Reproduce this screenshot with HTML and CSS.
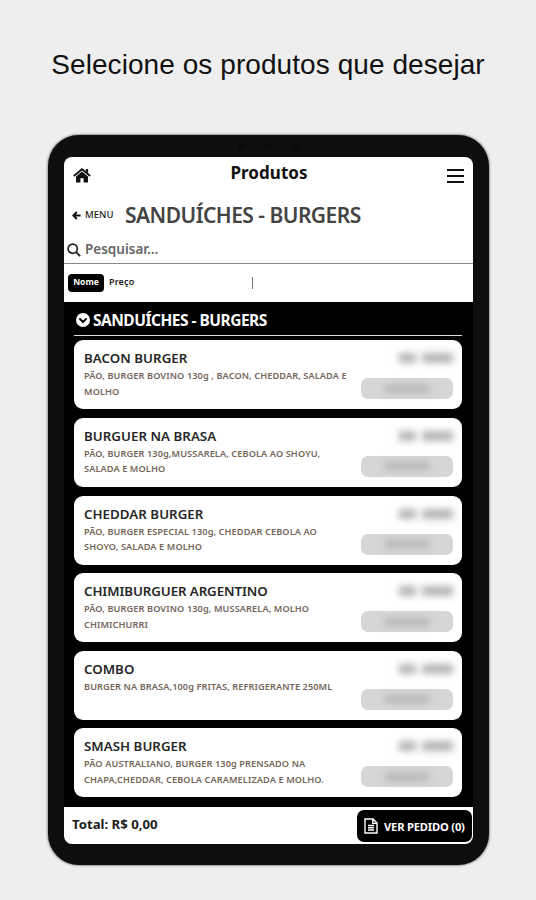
FILE: index.html
```html
<!DOCTYPE html>
<html lang="pt-BR">
<head>
    <meta charset="UTF-8">
    <meta name="viewport" content="width=device-width, initial-scale=1.0">
    <title>Produtos</title>
    <link rel="stylesheet" href="styles.css">
</head>
<body>
    <h1 class="headline">Selecione os produtos que desejar</h1>
    <div class="tablet">
        <div class="camera"><i></i><i></i><i></i></div>
        <div class="screen">
            <div class="topbar">
                <svg class="home" viewBox="0 0 18 15"><path d="M0.8 8 L9 1.2 L17.2 8" fill="none" stroke="#111" stroke-width="1.8"/><path d="M12.8 1h2.3v4.6l-2.3-2z M3 8.4 9 3.6l6 4.8V14.5h-4.4v-4.2H7.4v4.2H3z" fill="#111"/></svg>
                <span class="page-title">Produtos</span>
                <div class="burger"><i></i><i></i><i></i></div>
            </div>
            <div class="category">
                <svg class="back" viewBox="0 0 9 9"><path d="M8.6 4.5H1.6M4.8 1 1.3 4.5 4.8 8" fill="none" stroke="#111" stroke-width="1.9"/></svg>
                <span class="menu">MENU</span>
                <h2>SANDUÍCHES - BURGERS</h2>
            </div>
            <div class="search">
                <svg viewBox="0 0 14 14"><circle cx="5.7" cy="5.7" r="4.6" fill="none" stroke="#222" stroke-width="1.7"/><path d="M9.1 9.1l4 4" stroke="#222" stroke-width="2"/></svg>
                <span>Pesquisar...</span>
            </div>
            <div class="sort">
                <span class="sort-active">Nome</span>
                <span class="sort-price">Preço</span>
                <span class="sort-divider"></span>
            </div>
            <div class="list">
                <div class="list-title">
                    <svg viewBox="0 0 14 14"><circle cx="7" cy="7" r="7" fill="#fff"/><path d="M3.4 5.4 7 9l3.6-3.6" fill="none" stroke="#000" stroke-width="2"/></svg>
                    <h3>SANDUÍCHES - BURGERS</h3>
                </div>
                <div class="card">
                    <div class="info">
                        <h4>BACON BURGER</h4>
                        <p>PÃO, BURGER BOVINO 130g , BACON, CHEDDAR, SALADA E<br>MOLHO</p>
                    </div>
                    <div class="side"><span class="price"><i></i><i></i></span><span class="add"></span></div>
                </div>
                <div class="card">
                    <div class="info">
                        <h4>BURGUER NA BRASA</h4>
                        <p>PÃO, BURGER 130g,MUSSARELA, CEBOLA AO SHOYU,<br>SALADA E MOLHO</p>
                    </div>
                    <div class="side"><span class="price"><i></i><i></i></span><span class="add"></span></div>
                </div>
                <div class="card">
                    <div class="info">
                        <h4>CHEDDAR BURGER</h4>
                        <p>PÃO, BURGER ESPECIAL 130g, CHEDDAR CEBOLA AO<br>SHOYO, SALADA E MOLHO</p>
                    </div>
                    <div class="side"><span class="price"><i></i><i></i></span><span class="add"></span></div>
                </div>
                <div class="card">
                    <div class="info">
                        <h4 class="long">CHIMIBURGUER ARGENTINO</h4>
                        <p>PÃO, BURGER BOVINO 130g, MUSSARELA, MOLHO<br>CHIMICHURRI</p>
                    </div>
                    <div class="side"><span class="price"><i></i><i></i></span><span class="add"></span></div>
                </div>
                <div class="card">
                    <div class="info">
                        <h4>COMBO</h4>
                        <p>BURGER NA BRASA,100g FRITAS, REFRIGERANTE 250ML</p>
                    </div>
                    <div class="side"><span class="price"><i></i><i></i></span><span class="add"></span></div>
                </div>
                <div class="card">
                    <div class="info">
                        <h4>SMASH BURGER</h4>
                        <p>PÃO AUSTRALIANO, BURGER 130g PRENSADO NA<br>CHAPA,CHEDDAR, CEBOLA CARAMELIZADA E MOLHO.</p>
                    </div>
                    <div class="side"><span class="price"><i></i><i></i></span><span class="add"></span></div>
                </div>
            </div>
            <div class="footer">
                <span class="total">Total: R$ 0,00</span>
                <div class="order">
                    <svg viewBox="0 0 14 16"><path d="M1 1h8l4 4v10H1zM8.8 1v4.4H13M4 7.5h6M4 9.7h6M4 12h6" fill="none" stroke="#fff" stroke-width="1.4"/></svg>
                    <span>VER PEDIDO (0)</span>
                </div>
            </div>
        </div>
    </div>
</body>
</html>
```
FILE: styles.css
```css
* {
    box-sizing: border-box;
}
body {
    margin: 0;
    height: 900px;
    overflow: hidden;
    background-color: #eee;
    font-family: "Noto Sans", "Open Sans", sans-serif;
    color: #1c1c1c;
}
h1, h2, h3, h4, p {
    margin: 0;
}
svg {
    display: block;
    flex: none;
}
span {
    white-space: nowrap;
}
.headline {
    height: 135px;
    padding-top: 48px;
    font-family: "Liberation Sans", Arial, sans-serif;
    font-size: 28px;
    line-height: 34px;
    font-weight: 400;
    text-align: center;
    letter-spacing: 0.07px;
    color: #111;
}
.tablet {
    width: 441px;
    height: 730px;
    margin-left: 48px;
    padding: 0 16px;
    border-radius: 31px;
    background-color: #0d0f0e;
    box-shadow: 0 0 2px 1px #999;
}
.camera {
    height: 22px;
    display: flex;
    justify-content: center;
    align-items: center;
    gap: 20px;
}
.camera i {
    width: 7px;
    height: 7px;
    border-radius: 50%;
    background-color: #090b0a;
}
.screen {
    width: 409px;
    height: 687px;
    border-radius: 8px;
    overflow: hidden;
    background-color: #fff;
}
.topbar {
    height: 37px;
    padding: 0 9px;
    display: flex;
    align-items: center;
    justify-content: space-between;
}
.home {
    width: 18px;
    height: 15px;
}
.page-title {
    font-size: 17px;
    font-weight: 700;
    line-height: 32px;
    letter-spacing: 0.05px;
    margin-bottom: 5px;
    color: #111;
}
.burger {
    width: 17px;
    height: 14px;
    display: flex;
    flex-direction: column;
    justify-content: space-between;
}
.burger i {
    height: 2px;
    background-color: #111;
}
.category {
    height: 43px;
    padding-left: 8px;
    display: flex;
    align-items: center;
}
.back {
    width: 9px;
    height: 9px;
}
.menu {
    width: 44px;
    padding-left: 4px;
    margin-top: -2px;
    font-size: 9.5px;
    font-weight: 500;
}
.category h2 {
    margin-top: -2px;
    font-size: 21px;
    font-weight: 600;
    line-height: 28px;
    letter-spacing: -0.53px;
    color: #444;
    white-space: nowrap;
}
.search {
    height: 27px;
    padding-left: 3px;
    display: flex;
    align-items: center;
    border-bottom: 1px solid #888;
    font-size: 13.5px;
    font-weight: 600;
    color: #666;
}
.search span {
    margin-top: -2px;
}
.search svg {
    width: 14px;
    height: 14px;
    margin-right: 4px;
}
.sort {
    height: 38px;
    padding-left: 4px;
    display: flex;
    align-items: center;
    font-size: 8.5px;
    font-weight: 600;
}
.sort-active {
    width: 36px;
    height: 18px;
    border-radius: 4px;
    background-color: #000;
    color: #fff;
    line-height: 16px;
    text-align: center;
    font-weight: 700;
}
.sort-price {
    width: 148px;
    padding-left: 5px;
    margin-top: -3px;
    font-size: 9px;
    letter-spacing: 0.15px;
}
.sort-divider {
    width: 1px;
    height: 12px;
    background-color: #777;
}
.list {
    height: 505px;
    padding: 0 11px 0 10px;
    background-color: #000;
    display: flex;
    flex-direction: column;
}
.list-title {
    height: 34px;
    padding-left: 2px;
    margin-bottom: 4.4px;
    flex: none;
    display: flex;
    align-items: center;
    gap: 3px;
    border-bottom: 1px solid #ddd;
    color: #fff;
}
.list-title svg {
    width: 14px;
    height: 14px;
    margin-top: 3px;
}
.list-title h3 {
    font-size: 15.5px;
    font-weight: 700;
    line-height: 20px;
    letter-spacing: -0.5px;
    margin-top: 3px;
    white-space: nowrap;
}
.card {
    height: 69px;
    margin-bottom: 8.6px;
    padding: 0 9px 0 10px;
    flex: none;
    display: flex;
    justify-content: space-between;
    border-radius: 9px;
    background-color: #fff;
}
.info {
    width: 269px;
    white-space: nowrap;
}
.info h4 {
    margin-top: 8px;
    font-size: 13.3px;
    font-weight: 600;
    line-height: 20px;
    letter-spacing: 0.03px;
    color: #262626;
}
.info .long {
    letter-spacing: -0.09px;
}
.info p {
    font-size: 9.2px;
    font-weight: 600;
    line-height: 15.4px;
    letter-spacing: 0.09px;
    color: #74665a;
}
.side {
    width: 92px;
    display: flex;
    flex-direction: column;
    align-items: flex-end;
}
/* hidden price */
.price {
    width: 54px;
    height: 10px;
    margin-top: 13px;
    display: flex;
    gap: 6px;
    filter: blur(3.8px);
}
.price i {
    width: 17px;
    background-color: #b5b5b5;
}
.price i + i {
    width: 31px;
}
.add {
    width: 92px;
    height: 21px;
    margin-top: 15px;
    border-radius: 7px;
    background-color: #d5d6d7;
    display: flex;
    align-items: center;
    justify-content: center;
}
.add::after {
    content: "";
    width: 44px;
    height: 8px;
    background-color: #b6b7b8;
    filter: blur(3.5px);
}
.footer {
    height: 37px;
    padding-left: 8px;
    padding-right: 1px;
    display: flex;
    justify-content: space-between;
}
.total {
    font-size: 13.2px;
    font-weight: 700;
    line-height: 34px;
}
.order {
    width: 115px;
    height: 32px;
    margin-top: 3px;
    padding-left: 7px;
    border-radius: 7px;
    background-color: #000;
    display: flex;
    align-items: center;
    gap: 6px;
    color: #fff;
    font-size: 11.2px;
    font-weight: 700;
    letter-spacing: -0.2px;
}
.order svg {
    width: 14px;
    height: 16px;
}
```
